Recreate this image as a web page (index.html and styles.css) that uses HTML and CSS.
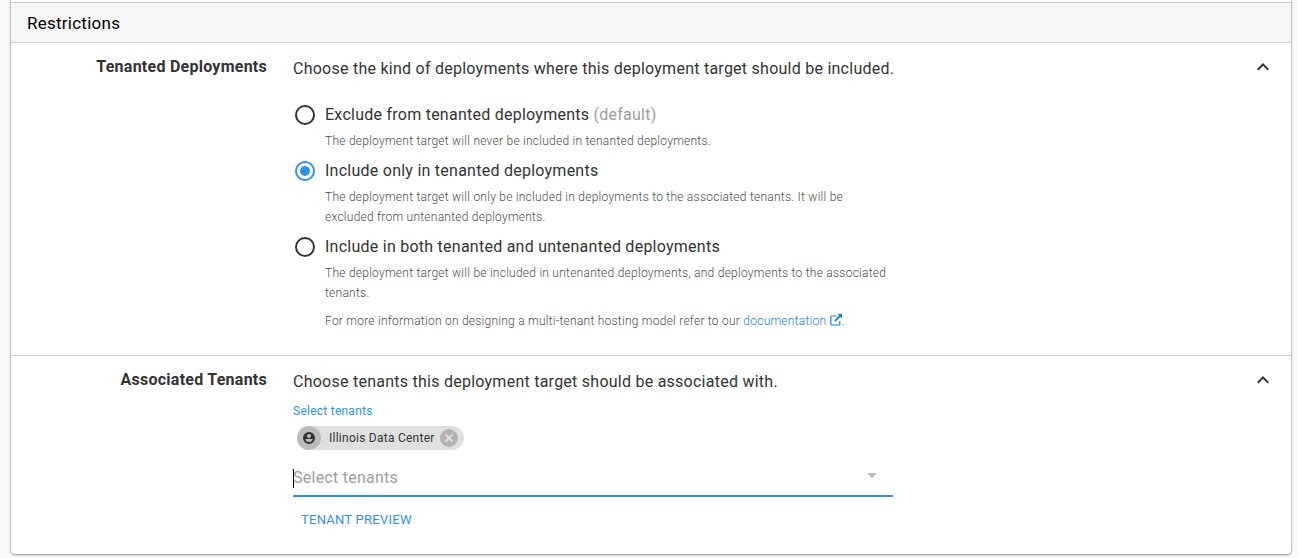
FILE: index.html
```html
<!DOCTYPE html>
<html lang="en">
<head>
<meta charset="utf-8">
<title>Restrictions</title>
<link rel="stylesheet" href="styles.css">
</head>
<body>
<main class="card">
  <h2 class="card-heading">Restrictions</h2>
  <section class="section section-deployments">
    <h3 class="section-title">Tenanted Deployments</h3>
    <div class="section-body">
      <p class="summary">Choose the kind of deployments where this deployment target should be included.</p>
      <div class="options">
        <div class="option">
          <span class="radio"></span>
          <div class="option-text">
            <div class="option-label">Exclude from tenanted deployments <span class="muted">(default)</span></div>
            <p class="note">The deployment target will never be included in tenanted deployments.</p>
          </div>
        </div>
        <div class="option">
          <span class="radio radio-checked"></span>
          <div class="option-text">
            <div class="option-label">Include only in tenanted deployments</div>
            <p class="note">The deployment target will only be included in deployments to the associated tenants. It will be excluded from untenanted deployments.</p>
          </div>
        </div>
        <div class="option">
          <span class="radio"></span>
          <div class="option-text">
            <div class="option-label">Include in both tenanted and untenanted deployments</div>
            <p class="note">The deployment target will be included in untenanted deployments, and deployments to the associated tenants.</p>
            <p class="note">For more information on designing a multi-tenant hosting model refer to our <a class="link" href="#">documentation <svg class="external" viewBox="0 0 12 12"><path d="M6.5 2H1.9Q.8 2 .8 3.100V9.900Q.8 11 1.900 11H8.700Q9.800 11 9.800 9.900V7" fill="none" stroke="currentColor" stroke-width="1.200"/><path d="M7.500 0H12V4.500L10.400 2.900L5.500 7.800L4.200 6.500L9.100 1.600Z" fill="currentColor"/></svg></a>.</p>
          </div>
        </div>
      </div>
    </div>
    <svg class="chevron" viewBox="0 0 24 24"><path d="M12 8l-6 6 1.410 1.410L12 10.830l4.590 4.580L18 14z"/></svg>
  </section>
  <section class="section section-tenants">
    <h3 class="section-title">Associated Tenants</h3>
    <div class="section-body">
      <p class="summary">Choose tenants this deployment target should be associated with.</p>
      <div class="field-label">Select tenants</div>
      <div class="chip">
        <span class="chip-avatar"><svg viewBox="0 0 24 24"><path fill-rule="evenodd" d="M12 0a12 12 0 1 0 0 24a12 12 0 0 0 0-24zM12 4a4 4 0 1 1 0 8a4 4 0 0 1 0-8zM4.500 14H19.500Q18 20 12 20T4.500 14z"/></svg></span>
        <span class="chip-text">Illinois Data Center</span>
        <svg class="chip-remove" viewBox="2 2 20 20"><path class="chip-remove-disc" d="M12 2a10 10 0 1 0 0 20a10 10 0 0 0 0-20z"/><path class="chip-remove-cross" d="M8 8l8 8M16 8l-8 8"/></svg>
      </div>
      <div class="select">
        <span class="caret"></span>
        <span class="placeholder">Select tenants</span>
        <span class="arrow"></span>
      </div>
      <button class="preview" type="button">Tenant preview</button>
    </div>
    <svg class="chevron" viewBox="0 0 24 24"><path d="M12 8l-6 6 1.410 1.410L12 10.830l4.590 4.580L18 14z"/></svg>
  </section>
</main>
</body>
</html>
```
FILE: styles.css
```css
* { box-sizing: border-box; }
body {
  margin: 0;
  height: 558px;
  padding: 0 7px 0 11px;
  overflow: hidden;
  background: #fafafa;
  color: #333;
  font: 16px/24px Roboto, sans-serif;
  letter-spacing: 0.25px;
}
p, h2, h3 { margin: 0; }
.card {
  width: 1280px;
  height: 554px;
  padding-top: 2px;
  background: #fff;
  border-radius: 0 0 4px 4px;
  box-shadow: 0 1px 3px rgba(0, 0, 0, .3), 0 0 1px 1px rgba(0, 0, 0, .14);
}
.card-heading {
  height: 41px;
  padding: 8px 16px;
  border: solid #ccc;
  border-width: 1px 0;
  background: #f6f6f6;
  color: #000;
  font-size: 17px;
  font-weight: 400;
}
.section {
  display: grid;
  grid-template-columns: 256px 600px 1fr;
  column-gap: 26px;
  padding-top: 14px;
}
.section-deployments {
  height: 313px;
  border-bottom: 1px solid #ccc;
}
.section-title {
  font-size: 16px;
  font-weight: 700;
  line-height: 20px;
  text-align: right;
}
.summary { line-height: 24px; white-space: nowrap; }
.chevron {
  justify-self: end;
  width: 24px;
  height: 24px;
  margin: -2px 16px 0 0;
  fill: #333;
}
.options { margin-top: 22px; }
.option {
  display: flex;
  gap: 10px;
  padding-left: 2px;
}
.radio {
  flex: none;
  width: 20px;
  height: 20px;
  margin-top: 2px;
  border: 2px solid #333;
  border-radius: 50%;
}
.radio-checked {
  padding: 3px;
  border-color: #2f93e0;
  background: #2f93e0 content-box;
}
.option-label { height: 28px; }
.muted, .placeholder { color: #9e9e9e; }
.note {
  padding: 0 0 8px;
  color: #4c4c4c;
  font-size: 12px;
  font-weight: 300;
  line-height: 20px;
}
.link { color: #1a80d8; text-decoration: none; }
.external {
  width: 12px;
  height: 12px;
  vertical-align: -1px;
}
.field-label {
  margin-top: 8px;
  color: #2f93e0;
  font-size: 12px;
  line-height: 18px;
}
.chip {
  display: flex;
  align-items: center;
  width: 167px;
  height: 24px;
  margin: 6px 0 0 4px;
  border-radius: 12px;
  background: #e0e0e0;
  font-size: 12px;
}
.chip-avatar {
  display: grid;
  place-items: center;
  width: 24px;
  height: 24px;
  border-radius: 50%;
  background: #bcbcbc;
}
.chip-avatar svg { width: 12px; height: 12px; fill: #333; }
.chip-text { width: 111px; padding-left: 8px; white-space: nowrap; }
.chip-remove { width: 18px; height: 18px; margin-left: 8px; }
.chip-remove-disc { fill: #b3b3b3; }
.chip-remove-cross { stroke: #e0e0e0; stroke-width: 2.2; }
.select {
  display: flex;
  align-items: center;
  height: 38px;
  margin-top: 9px;
  border-bottom: 2px solid #2f93e0;
}
.caret { width: 1px; height: 19px; margin: 2px -1px 0 0; background: #000; }
.placeholder { flex: 1; padding-top: 2px; }
.arrow {
  margin: -4px 16px 0 0;
  border: solid transparent;
  border-width: 5px 5px 0;
  border-top-color: #b8b8b8;
}
.preview {
  display: block;
  margin-top: 5px;
  padding: 0 8px;
  border: 0;
  background: none;
  color: #2f93e0;
  font: 13px/36px Roboto, sans-serif;
  letter-spacing: 0.25px;
  text-transform: uppercase;
}
```
